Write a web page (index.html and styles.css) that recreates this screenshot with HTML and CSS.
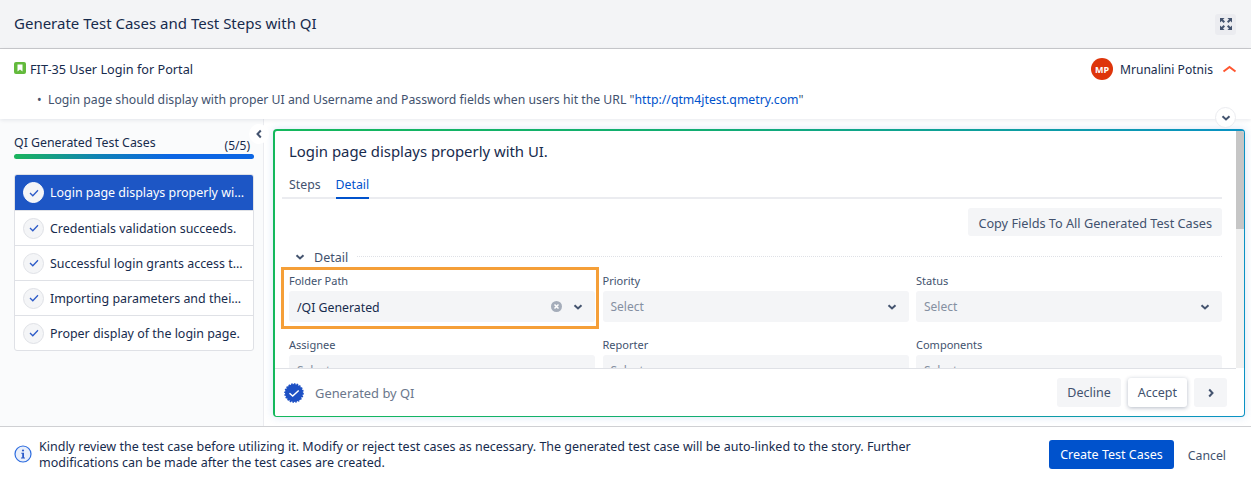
FILE: index.html
```html
<!DOCTYPE html>
<html lang="en">
<head>
<meta charset="utf-8">
<title>Generate Test Cases</title>
<link rel="stylesheet" href="styles.css">
</head>
<body>
<div class="modal">
  <header class="top">
    <h1>Generate Test Cases and Test Steps with QI</h1>
    <button class="expand" aria-label="Expand">
      <svg width="14" height="14" viewBox="0 0 14 14" fill="#44546f"><path d="M1 1h4.6L4 2.6l2 2L4.600 6l-2-2L1 5.600zM13 1v4.600L11.400 4l-2 2L8 4.600l2-2L8.400 1zM1 13V8.400L2.600 10l2-2L6 9.400l-2 2L5.600 13zM13 13H8.400L10 11.400l-2-2L9.400 8l2 2L13 8.400z"/></svg>
    </button>
  </header>
  <section class="story">
    <div class="story-row">
      <div class="story-title">
        <svg class="story-icon" width="12" height="12" viewBox="0 0 12 12"><rect width="12" height="12" rx="2" fill="#63ba3c"/><path d="M3.500 2.500h5v7L6 7.600 3.500 9.500z" fill="#fff"/></svg>
        <span>FIT-35 User Login for Portal</span>
      </div>
      <div class="story-user">
        <span class="avatar">MP</span>
        <span>Mrunalini Potnis</span>
        <svg class="caret-up" width="15" height="8" viewBox="0 0 15 8" fill="none"><path d="M1.500 6.500L7.500 2l6 4.500" stroke="#ff5630" stroke-width="2"/></svg>
      </div>
    </div>
    <ul class="story-desc">
      <li>Login page should display with proper UI and Username and Password fields when users hit the URL "<a href="#">http://qtm4jtest.qmetry.com</a>"</li>
    </ul>
    <button class="collapse-round" aria-label="Collapse">
      <svg width="10" height="6" viewBox="0 0 10 6" fill="none"><path d="M1.500 1.200L5 4.500l3.500-3.300" stroke="#44546f" stroke-width="2"/></svg>
    </button>
  </section>
  <main class="body">
    <aside class="side">
      <div class="side-head"><span>QI Generated Test Cases</span><span class="count">(5/5)</span></div>
      <div class="progress"></div>
      <ol class="cases">
        <li class="case active"><span class="tick"><svg width="10" height="8" viewBox="0 0 10 8" fill="none"><path d="M1 4l2.800 2.800L9 1.200" stroke="#2d5bc8" stroke-width="1.300"/></svg></span><span class="case-text">Login page displays properly with UI.</span></li>
        <li class="case"><span class="tick"><svg width="10" height="8" viewBox="0 0 10 8" fill="none"><path d="M1 4l2.800 2.800L9 1.200" stroke="#2d5bc8" stroke-width="1.300"/></svg></span><span class="case-text">Credentials validation succeeds.</span></li>
        <li class="case"><span class="tick"><svg width="10" height="8" viewBox="0 0 10 8" fill="none"><path d="M1 4l2.800 2.800L9 1.200" stroke="#2d5bc8" stroke-width="1.300"/></svg></span><span class="case-text">Successful login grants access to the portal.</span></li>
        <li class="case"><span class="tick"><svg width="10" height="8" viewBox="0 0 10 8" fill="none"><path d="M1 4l2.800 2.800L9 1.200" stroke="#2d5bc8" stroke-width="1.300"/></svg></span><span class="case-text">Importing parameters and their values.</span></li>
        <li class="case"><span class="tick"><svg width="10" height="8" viewBox="0 0 10 8" fill="none"><path d="M1 4l2.800 2.800L9 1.200" stroke="#2d5bc8" stroke-width="1.300"/></svg></span><span class="case-text">Proper display of the login page.</span></li>
      </ol>
      <button class="side-toggle" aria-label="Collapse sidebar">
        <svg width="6" height="10" viewBox="0 0 6 10" fill="none"><path d="M4.800 1.500L1.500 5l3.300 3.500" stroke="#44546f" stroke-width="2"/></svg>
      </button>
    </aside>
    <div class="content">
      <article class="card">
        <div class="scroll">
          <div class="pane">
            <h2>Login page displays properly with UI.</h2>
            <nav class="tabs"><span class="tab">Steps</span><span class="tab current">Detail</span></nav>
            <div class="copy-row"><button class="btn">Copy Fields To All Generated Test Cases</button></div>
            <div class="section-head">
              <svg width="10" height="6" viewBox="0 0 10 6" fill="none"><path d="M1.500 1.200L5 4.500l3.500-3.300" stroke="#44546f" stroke-width="2"/></svg>
              <span>Detail</span><i class="dots"></i>
            </div>
            <div class="fields">
              <div class="field highlighted">
                <label>Folder Path</label>
                <div class="select value"><span>/QI Generated</span>
                  <svg class="clear" width="11" height="11" viewBox="0 0 11 11"><circle cx="5.500" cy="5.500" r="5.500" fill="#a5adba"/><path d="M3.500 3.500l4 4M7.500 3.500l-4 4" stroke="#fff" stroke-width="1.500"/></svg>
                  <svg width="10" height="6" viewBox="0 0 10 6" fill="none"><path d="M1.500 1.200L5 4.500l3.500-3.300" stroke="#44546f" stroke-width="2"/></svg>
                </div>
              </div>
              <div class="field"><label>Priority</label><div class="select"><span>Select</span><svg width="10" height="6" viewBox="0 0 10 6" fill="none"><path d="M1.500 1.200L5 4.500l3.500-3.300" stroke="#44546f" stroke-width="2"/></svg></div></div>
              <div class="field"><label>Status</label><div class="select"><span>Select</span><svg width="10" height="6" viewBox="0 0 10 6" fill="none"><path d="M1.500 1.200L5 4.500l3.500-3.300" stroke="#44546f" stroke-width="2"/></svg></div></div>
              <div class="field"><label>Assignee</label><div class="select"><span>Select</span></div></div>
              <div class="field"><label>Reporter</label><div class="select"><span>Select</span></div></div>
              <div class="field"><label>Components</label><div class="select"><span>Select</span></div></div>
            </div>
          </div>
          <div class="scrollbar"><div class="thumb"></div></div>
        </div>
        <footer class="card-foot">
          <div class="gen">
            <svg width="20" height="20" viewBox="0 0 20 20"><circle cx="10" cy="10" r="9" fill="#1d50c4" stroke="#1d50c4" stroke-width="1.600" stroke-dasharray="1.600 1.200"/><path d="M5.500 10.200l3.200 2.800 6-5.500" fill="none" stroke="#fff" stroke-width="1.500"/></svg>
            <span>Generated by QI</span>
          </div>
          <div class="actions">
            <button class="btn">Decline</button>
            <button class="btn raised">Accept</button>
            <button class="btn next" aria-label="Next"><svg width="6" height="10" viewBox="0 0 6 10" fill="none"><path d="M1.200 1.500L4.500 5 1.200 8.500" stroke="#44546f" stroke-width="2"/></svg></button>
          </div>
        </footer>
      </article>
    </div>
  </main>
  <footer class="bottom">
    <svg class="info" width="18" height="18" viewBox="0 0 18 18"><circle cx="9" cy="9" r="8" fill="#e9effb" stroke="#2d6cdf" stroke-width="1.200"/><circle cx="9" cy="5.500" r="1.100" fill="#2d5bc8"/><path d="M7.300 7.800H10v4.600h1v1H7v-1h1.200V8.800h-.9z" fill="#2d5bc8"/></svg>
    <p>Kindly review the test case before utilizing it. Modify or reject test cases as necessary. The generated test case will be auto-linked to the story. Further modifications can be made after the test cases are created.</p>
    <div class="bottom-actions">
      <button class="primary">Create Test Cases</button>
      <button class="link">Cancel</button>
    </div>
  </footer>
</div>
</body>
</html>
```
FILE: styles.css
```css
*, *::before, *::after { box-sizing: border-box; }
html, body { margin: 0; height: 100%; overflow: hidden; }
body {
  font-family: "Noto Sans", "Open Sans", sans-serif;
  font-size: 12px;
  color: #172b4d;
  background: #fff;
}
button { font: inherit; border: 0; cursor: pointer; }
.modal { width: 1251px; height: 482px; display: flex; flex-direction: column; }

.top {
  height: 49px;
  flex: none;
  display: flex;
  align-items: center;
  justify-content: space-between;
  padding: 0 15px 2px 14px;
  background: #f3f4f6;
  border-bottom: 1px solid #c9cacd;
}
.top h1 { margin: 0; font-size: 15px; font-weight: 400; color: #172b4d; }
.expand {
  width: 21px; height: 21px; padding: 0; border-radius: 3px; margin-top: 2px;
  background: #ebecf0; display: flex; align-items: center; justify-content: center;
}

.story {
  position: relative;
  z-index: 2;
  height: 70px;
  flex: none;
  padding: 9px 14px 0;
  background: #fff;
  box-shadow: 0 1px 4px rgba(9, 30, 66, .1);
}
.story-row { display: flex; justify-content: space-between; align-items: center; height: 22px; }
.story-title { display: flex; align-items: center; gap: 4px; color: #172b4d; font-size: 12.700px; }
.story-icon { margin-top: -2px; }
.story-user { display: flex; align-items: center; color: #172b4d; font-size: 12.100px; }
.avatar {
  width: 22px; height: 22px; border-radius: 50%; background: #de350b; color: #fff;
  font-size: 9px; font-weight: 700; display: flex; align-items: center; justify-content: center;
  margin-right: 7px;
}
.caret-up { margin-left: 9px; }
.story-desc { list-style: none; margin: 10px 0 0; padding: 0 0 0 23px; color: #42526e; line-height: 20px; font-size: 12.250px; }
.story-desc li::before { content: "\2022"; display: inline-block; width: 11px; }
.story-desc a { color: #0052cc; text-decoration: none; }
.collapse-round {
  position: absolute; right: 15px; top: 58px; width: 21px; height: 21px; border-radius: 50%; padding: 0;
  background: #fff; border: 1px solid #ebecf0; display: flex; align-items: center; justify-content: center;
}

.body { flex: 1; min-height: 0; display: flex; background: #fff; }
.side {
  position: relative;
  width: 264px;
  flex: none;
  padding: 16px 9px 0 14px;
  background: #fafbfc;
  border-right: 1px solid #ebecf0;
}
.side-head { display: flex; justify-content: space-between; color: #172b4d; line-height: 16px; font-size: 12.350px; }
.count { position: relative; top: 3px; right: 4px; font-size: 12px; }
.progress {
  height: 5px; margin-top: 3px; border-radius: 3px;
  background: linear-gradient(90deg, #1bb55c 0%, #0f82b5 35%, #0c66e4 65%, #0c66e4 100%);
}
.cases {
  list-style: none; margin: 15px 0 0; padding: 0;
  background: #fff; border: 1px solid #dfe1e6; border-radius: 3px; overflow: hidden;
}
.case {
  height: 35px; padding: 0 7px 0 8px; display: flex; align-items: center; gap: 6px;
  border-top: 1px solid #dfe1e6; color: #172b4d; font-size: 12.450px;
}
.case:first-child { border-top: 0; }
.case.active { background: #1d56c5; color: #fff; height: 35px; }
.tick {
  width: 21px; height: 21px; flex: none; border-radius: 50%;
  background: #f4f5f7; border: 1px solid #dfe1e6;
  display: flex; align-items: center; justify-content: center;
}
.active .tick { background: #f4f5f7; border-color: #fff; }
.case-text { white-space: nowrap; overflow: hidden; text-overflow: ellipsis; }
.side-toggle {
  position: absolute; right: -6px; top: 5px; width: 20px; height: 20px; border-radius: 50%; padding: 0;
  background: #fff; display: flex; align-items: center; justify-content: center;
}

.content { flex: 1; min-width: 0; padding: 10px 6px 9px 9px; background: #fff; }
.card {
  height: 100%;
  display: flex; flex-direction: column;
  border-style: solid;
  border-color: transparent;
  border-width: 2px 1px 1px 2px;
  border-radius: 4px;
  background: linear-gradient(#fff, #fff) padding-box,
              linear-gradient(90deg, #14b85c 0%, #12ad73 45%, #0a92c4 100%) border-box;
  box-shadow: 0 0 8px rgba(40, 110, 200, .18);
  overflow: hidden;
}
.scroll { flex: 1; min-height: 0; display: flex; overflow: hidden; }
.pane { flex: 1; min-width: 0; padding: 0 14px 0 7px; }
.pane h2 { margin: 0; padding: 10px 0 0 7px; font-size: 14.900px; font-weight: 400; line-height: 20px; color: #172b4d; }
.tabs { display: flex; gap: 15px; margin-top: 15px; padding-left: 7px; border-bottom: 2px solid #ebecf0; height: 23px; font-size: 12.300px; }
.tab { color: #42526e; line-height: 17px; height: 23px; }
.tab.current { color: #0052cc; border-bottom: 2px solid #0052cc; }
.copy-row { display: flex; justify-content: flex-end; margin-top: 9px; }
.btn {
  height: 28px; padding: 0 10px; border-radius: 3px; background: #f4f5f7; color: #42526e; font-size: 12.700px;
}
.copy-row .btn { padding-top: 1px; }
.section-head { display: flex; align-items: center; gap: 9px; margin-top: 12px; padding-left: 13px; height: 18px; color: #42526e; font-size: 12.500px; }
.dots { flex: 1; border-top: 1px dotted #dfe1e6; margin-top: -1px; }
.fields { display: grid; grid-template-columns: repeat(3, 306px); column-gap: 7.500px; row-gap: 16px; margin-top: 8px; padding-left: 7px; }
.field { position: relative; }
.field label { display: block; font-size: 11px; line-height: 13px; height: 17px; color: #42526e; }
.highlighted::after {
  content: ""; position: absolute; left: -8px; top: -7px; width: 318px; height: 62px;
  border: 3px solid #f59f38; pointer-events: none;
}
.select {
  height: 31px; padding: 0 12px 0 8px; border-radius: 3px; background: #f4f5f7;
  display: flex; align-items: center; color: #8590a2;
}
.select span { flex: 1; }
.select.value { color: #172b4d; font-size: 12.300px; }
.select.value span { padding-top: 1px; }
.clear { margin-right: 11px; }
.scrollbar { width: 8px; flex: none; background: #f0f0f0; }
.thumb { height: 98px; background: #c6c6c6; }
.card-foot {
  height: 48px; flex: none; display: flex; justify-content: space-between; align-items: center;
  padding: 0 9px 0 9px; margin-right: 8px; background: #fff; border-top: 1px solid #dfe1e6;
}
.gen { display: flex; align-items: center; gap: 11px; color: #6b778c; font-size: 12.900px; }
.actions { display: flex; gap: 7px; }
.actions .btn { height: 29px; padding: 0 10px; font-size: 12.500px; }
.actions .btn.raised { background: #fff; box-shadow: 0 1px 4px rgba(9, 30, 66, .3); }
.actions .next { width: 33px; padding: 0; display: flex; align-items: center; justify-content: center; }

.bottom {
  height: 56px; flex: none; display: flex; align-items: center;
  padding: 0 25px 0 14px; border-top: 1px solid #cfd0d3; background: #fff;
}
.info { flex: none; margin-right: 7px; margin-top: -1px; }
.bottom p { margin: 1px 0 0; width: 905px; line-height: 16px; color: #172b4d; font-size: 12.500px; }
.bottom-actions { margin-left: auto; display: flex; align-items: center; gap: 14px; }
.primary { height: 29px; padding: 0 11px; border-radius: 3px; background: #0052cc; color: #fff; font-size: 12.500px; }
.link { padding: 0; background: none; color: #42526e; margin-top: 2px; font-size: 12.300px; }
```
